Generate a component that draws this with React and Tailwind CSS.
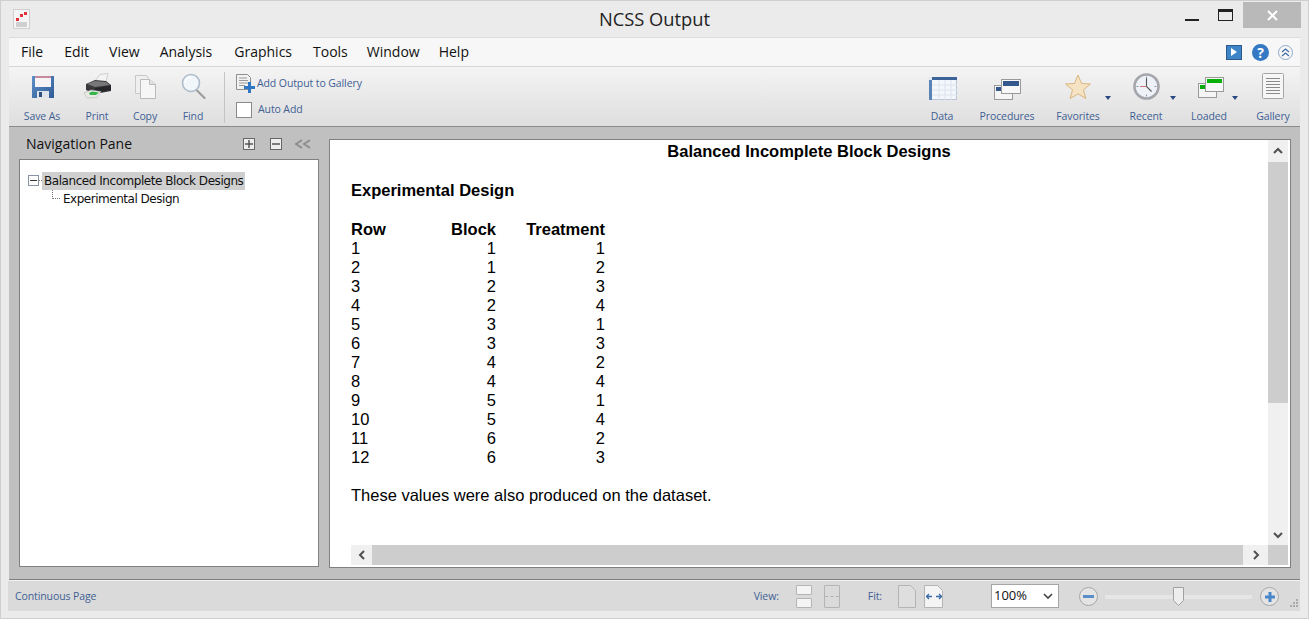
import React from 'react'

const UI_FONT = "font-['Open_Sans','Noto_Sans',sans-serif]"

const rows = [
  [1, 1, 1], [2, 1, 2], [3, 2, 3], [4, 2, 4], [5, 3, 1], [6, 3, 3],
  [7, 4, 2], [8, 4, 4], [9, 5, 1], [10, 5, 4], [11, 6, 2], [12, 6, 3],
]

function SaveIcon() {
  return (
    <svg width="22" height="22" viewBox="0 0 22 22">
      <defs>
        <linearGradient id="disk" x1="0" y1="0" x2="1" y2="1">
          <stop offset="0" stopColor="#5f8fc8" />
          <stop offset="1" stopColor="#2f5c96" />
        </linearGradient>
      </defs>
      <path d="M0 0h22v22H0z" fill="url(#disk)" />
      <rect x="3" y="0" width="16" height="11" fill="#f5f3f5" />
      <rect x="3" y="0" width="16" height="2" fill="#c9899c" />
      <rect x="5" y="15" width="12" height="7" fill="#dfe3ea" />
      <rect x="7" y="16" width="3" height="5" fill="#2f4f7e" />
    </svg>
  )
}

function PrintIcon() {
  return (
    <svg width="29" height="26" viewBox="0 0 29 26">
      <path d="M12 8 L17 1.500 L25 .5 L23 9z" fill="#f4f4f4" stroke="#aaa" strokeWidth="0.5" />
      <path d="M3 11 L12 7 L23 8 L28 12 V18 L12 21 L3 17z" fill="#3a3a3c" />
      <path d="M4 11 L12 8 L23 9 L27 12 L12 14z" fill="#77777a" />
      <path d="M12 15 L28 12.500 V17 L12 20z" fill="#26262a" />
      <path d="M1 20 L8 17 L18 18.500 L14 24.500 L4 25z" fill="#e6ece4" stroke="#aaa" strokeWidth="0.5" />
      <path d="M6 20 L9 18.500 L16 19.500 L13 22 L7 22z" fill="#38b54a" />
    </svg>
  )
}

function CopyIcon() {
  return (
    <svg width="21" height="24" viewBox="0 0 21 24">
      <path d="M.5.5h11l2 3v15H.5z" fill="#efefef" stroke="#c8c8c8" />
      <path d="M5.500 4.500h9l6 5v14h-15z" fill="#f6f6f6" stroke="#bbb" />
      <path d="M14.500 4.500v5h6" fill="#e2e2e2" stroke="#bbb" />
    </svg>
  )
}

function FindIcon() {
  return (
    <svg width="25" height="26" viewBox="0 0 25 26">
      <line x1="15.500" y1="17" x2="23.500" y2="25" stroke="#9c9c9c" strokeWidth="2.200" strokeLinecap="round" />
      <circle cx="10" cy="10" r="8.500" fill="#f1f6fb" stroke="#aebccb" strokeWidth="1.600" />
      <path d="M4 10a6 6 0 0 1 6-6" fill="none" stroke="#fff" strokeWidth="1.500" />
    </svg>
  )
}

function GalleryAddIcon() {
  return (
    <svg width="19" height="19" viewBox="0 0 19 19">
      <path d="M.5.5h11l3 3v12H.5z" fill="#f2f2f2" stroke="#8f8f8f" />
      <path d="M3 4h8M3 6.500h9M3 9h9M3 11.500h6" stroke="#9a9a9a" />
      <path d="M8 12h4V8h3v4h4v3h-4v4h-3v-4H8z" fill="#2f77c4" />
    </svg>
  )
}

function DataIcon() {
  return (
    <svg width="28" height="23" viewBox="0 0 28 23">
      <rect x=".5" y=".5" width="27" height="22" fill="#f3f6fb" stroke="#b9c5d6" />
      <rect x="0" y="0" width="28" height="3" fill="#3c6499" />
      <rect x="0" y="0" width="3" height="23" fill="#5a83b8" />
      <rect x="0" y="0" width="3" height="3" fill="#dfe8f4" />
      <path d="M3 8h25M3 13h25M3 18h25M10 3v20M16 3v20M22 3v20" stroke="#dce4ef" />
    </svg>
  )
}

function ProcIcon() {
  return (
    <svg width="27" height="21" viewBox="0 0 27 21">
      <rect x=".5" y="6.500" width="18" height="14" fill="#f5f5f5" stroke="#9a9a9a" />
      <rect x="2" y="8" width="7" height="4" fill="#35588c" />
      <rect x="7.500" y=".5" width="19" height="14" fill="#f7f7f7" stroke="#9a9a9a" />
      <rect x="9" y="2" width="16" height="5" fill="#35588c" />
    </svg>
  )
}

function LoadedIcon() {
  return (
    <svg width="27" height="21" viewBox="0 0 27 21">
      <rect x=".5" y="6.500" width="18" height="14" fill="#f5f5f5" stroke="#9a9a9a" />
      <rect x="2" y="8" width="7" height="4" fill="#08a808" />
      <rect x="7.500" y=".5" width="18" height="14" fill="#f7f7f7" stroke="#9a9a9a" />
      <rect x="9" y="2" width="15" height="4" fill="#08b008" />
    </svg>
  )
}

function StarIcon() {
  return (
    <svg width="26" height="26" viewBox="0 0 26 26">
      <path d="M13 1l3.500 8.500 9 .5-7 5.800 2.300 8.700L13 19.800 5.200 24.500l2.300-8.700-7-5.800 9-.5z" fill="#f5e3c3" stroke="#d9b77e" />
    </svg>
  )
}

function ClockIcon() {
  return (
    <svg width="27" height="27" viewBox="0 0 27 27">
      <circle cx="13.500" cy="13.500" r="12" fill="#eef2f8" stroke="#a4a6ab" strokeWidth="2.600" />
      <path d="M13.500 5v8.500l5 5" fill="none" stroke="#555" strokeWidth="1.100" />
      <path d="M13.500 13.500H7" stroke="#c77" />
      <path d="M13.500 3.500v2M13.500 21.500v2M3.500 13.500h2M21.500 13.500h2" stroke="#8a96a8" />
    </svg>
  )
}

function GalleryIcon() {
  return (
    <svg width="22" height="26" viewBox="0 0 22 26">
      <rect x=".5" y=".5" width="21" height="25" rx="1" fill="#f6f6f6" stroke="#a5a5a5" />
      <path d="M4 5.500h14M4 8.500h14M4 11.500h14M4 14.500h14M4 17.500h14M4 20.500h14" stroke="#8a8a8a" />
    </svg>
  )
}

function Caret() {
  return <span className="w-0 h-0 border-x-[3px] border-x-transparent border-t-[4px] border-t-[#2a4a7f]" />
}

function ToolButton({ label, width, caret, children }) {
  return (
    <div className={`relative flex flex-col items-center shrink-0 ${width}`}>
      <div className="h-[34px] flex items-center justify-center">{children}</div>
      <span className="mt-[6px] text-[10.5px] tracking-[-0.1px] leading-[14px] text-[#3f5f94] whitespace-nowrap">{label}</span>
      {caret && <span className="absolute -right-[2px] top-[27px] flex"><Caret /></span>}
    </div>
  )
}

function ScrollArrow({ d, className }) {
  return (
    <div className={`flex items-center justify-center bg-[#f0f0f0] ${className}`}>
      <svg width="12" height="12" viewBox="0 0 12 12">
        <path d={d} fill="none" stroke="#505050" strokeWidth="2" />
      </svg>
    </div>
  )
}

function ViewBtn({ className }) {
  return <span className={`block rounded-[1px] border border-[#b4b4b4] ${className}`} />
}

export default function App() {
  return (
    <div className={`w-[1309px] h-[619px] overflow-hidden flex flex-col bg-[#ebebeb] border border-[#cfcfcf] ${UI_FONT}`}>
      {/* title bar */}
      <div className="relative h-[36px] shrink-0 flex items-start pl-[12px] pt-[8px]">
        <svg width="17" height="20" viewBox="0 0 17 20">
          <rect x=".5" y=".5" width="16" height="19" fill="#f5f5f5" stroke="#cfcfcf" />
          <rect x="3" y="13" width="11" height="5" fill="#cfcfcf" />
          <rect x="3" y="9" width="3" height="3" fill="#e0323a" />
          <rect x="7" y="5" width="3" height="3" fill="#e0323a" />
          <rect x="11" y="3" width="3" height="3" fill="#e0323a" />
        </svg>
        <span className="flex-1 text-center text-[18.3px] leading-[24px] text-[#222] -mt-[2px] pl-[94px]">NCSS Output</span>
        <div className="flex items-start -mt-[7px] mr-[7px]">
          <span className="mt-[17px] w-[14px] h-[2px] bg-[#222]" />
          <span className="ml-[19px] mt-[7px] w-[15px] h-[12px] border border-[#222] border-t-[3px]" />
          <span className="ml-[10px] w-[58px] h-[26px] bg-[#b9b9b9] flex items-center justify-center">
            <svg width="11" height="11" viewBox="0 0 11 11">
              <path d="M1 1l9 9M10 1l-9 9" stroke="#fff" strokeWidth="2" />
            </svg>
          </span>
        </div>
      </div>

      {/* menu */}
      <div className="ml-[8px] mr-[8px] h-[30px] shrink-0 flex items-center pl-[12px] pr-[7px] pb-[2px] bg-[#f7f7f7] border-t border-[#dcdcdc] border-b border-b-[#d6d6d6] text-[14px] text-[#111]">
        <span>File</span>
        <span className="ml-[21px]">Edit</span>
        <span className="ml-[20px]">View</span>
        <span className="ml-[20px]">Analysis</span>
        <span className="ml-[22px]">Graphics</span>
        <span className="ml-[21px]">Tools</span>
        <span className="ml-[19px]">Window</span>
        <span className="ml-[19px]">Help</span>
        <div className="ml-auto mt-[2px] flex items-center">
          <span className="w-[16px] h-[15px] bg-[#3d85c6] border border-[#2c5a8c] flex items-center justify-center">
            <span className="w-0 h-0 border-y-[4px] border-y-transparent border-l-[6px] border-l-white" />
          </span>
          <span className="ml-[10px] w-[17px] h-[17px] rounded-full bg-[#3578c4] text-white text-[14px] leading-[17px] font-bold text-center">?</span>
          <span className="ml-[9px] w-[15px] h-[15px] rounded-full border border-[#8fa9cc] flex items-center justify-center">
            <svg width="9" height="9" viewBox="0 0 9 9">
              <path d="M1 4l3.500-3L8 4M1 8l3.500-3L8 8" fill="none" stroke="#3f6aa5" strokeWidth="1.200" />
            </svg>
          </span>
        </div>
      </div>

      {/* toolbar */}
      <div className="ml-[8px] mr-[8px] h-[60px] shrink-0 flex items-start pt-[2px] bg-gradient-to-b from-[#f4f4f4] to-[#dedede] border-b border-[#8c8c8c]">
        <ToolButton label="Save As" width="w-[48px] ml-[9px]"><span className="pt-[2px] pl-[1px]"><SaveIcon /></span></ToolButton>
        <ToolButton label="Print" width="w-[48px] ml-[7px]"><PrintIcon /></ToolButton>
        <ToolButton label="Copy" width="w-[48px]"><span className="pt-[2px]"><CopyIcon /></span></ToolButton>
        <ToolButton label="Find" width="w-[48px]"><FindIcon /></ToolButton>
        <span className="ml-[7px] mt-[3px] w-px h-[51px] bg-[#c4c4c4]" />
        <div className="ml-[11px] mt-[5px] flex flex-col text-[10.5px] tracking-[-0.1px] text-[#3f5f94]">
          <div className="flex items-center h-[19px] gap-[2px]">
            <GalleryAddIcon />
            <span>Add Output to Gallery</span>
          </div>
          <div className="flex items-center h-[16px] mt-[9px] gap-[6px]">
            <span className="w-[16px] h-[16px] bg-white border border-[#8a8a8a]" />
            <span>Auto Add</span>
          </div>
        </div>
        <div className="ml-auto flex items-start pr-[7px]">
          <ToolButton label="Data" width="w-[48px]"><span className="pt-[4px] pl-[1px]"><DataIcon /></span></ToolButton>
          <ToolButton label="Procedures" width="w-[66px] ml-[8px]"><span className="pt-[6px]"><ProcIcon /></span></ToolButton>
          <ToolButton label="Favorites" caret width="w-[62px] ml-[7px]"><span className="pt-[2px]"><StarIcon /></span></ToolButton>
          <ToolButton label="Recent" caret width="w-[56px] ml-[9px]"><ClockIcon /></ToolButton>
          <ToolButton label="Loaded" caret width="w-[54px] ml-[8px]"><span className="pl-[4px] pt-[2px]"><LoadedIcon /></span></ToolButton>
          <ToolButton label="Gallery" width="w-[40px] ml-[17px]"><GalleryIcon /></ToolButton>
        </div>
      </div>

      {/* main area */}
      <div className="ml-[8px] mr-[8px] h-[453px] shrink-0 flex items-start bg-[#c0c0c0] pl-[10px] pr-[9px] pt-[12px] border-b border-[#808080]">
        <div className="w-[300px] shrink-0 flex flex-col">
          <div className="h-[21px] pb-[12px] flex items-center pl-[7px] pr-[7px]">
            <span className="text-[14px] leading-[14px] text-[#111]">Navigation Pane</span>
            <span className="ml-auto w-[12px] h-[12px] border border-[#666] bg-[#eee] flex items-center justify-center">
              <svg width="10" height="10" viewBox="0 0 10 10"><path d="M1 5h8M5 1v8" stroke="#555" strokeWidth="1.500" /></svg>
            </span>
            <span className="ml-[15px] w-[12px] h-[12px] border border-[#666] bg-[#eee] flex items-center justify-center">
              <svg width="10" height="10" viewBox="0 0 10 10"><path d="M1 5h8" stroke="#555" strokeWidth="1.500" /></svg>
            </span>
            <svg className="ml-[12px]" width="18" height="10" viewBox="0 0 18 10">
              <path d="M8 1L2 5l6 4M16 1l-6 4 6 4" fill="none" stroke="#8c8c8c" strokeWidth="1.800" />
            </svg>
          </div>
          <div className="h-[408px] mt-[-1px] border border-[#808080] bg-white pt-[11px] pl-[8px] font-['DejaVu_Sans',sans-serif] text-[12px] text-[#111]">
            <div className="flex items-center h-[19px]">
              <span className="w-[11px] h-[11px] border border-[#8a93a3] flex items-center justify-center">
                <span className="w-[7px] h-px bg-[#333]" />
              </span>
              <span className="w-[3px] border-t border-dotted border-[#777]" />
              <span className="pl-[2px] pr-[2px] bg-[#cfcfcf] h-[18px] leading-[18px] tracking-[-0.45px] whitespace-nowrap">Balanced Incomplete Block Designs</span>
            </div>
            <div className="flex items-center h-[18px] ml-[24px]">
              <span className="w-[8px] h-[9px] -mt-[9px] border-l border-b border-dotted border-[#777]" />
              <span className="ml-[3px] tracking-[-0.48px]">Experimental Design</span>
            </div>
          </div>
        </div>

        <div className="ml-[10px] w-[962px] h-[429px] shrink-0 border border-[#808080] bg-white flex flex-col font-['Liberation_Sans',sans-serif] text-[16.5px] leading-[19px] text-black">
          <div className="flex flex-1 min-h-0">
            <div className="flex-1 pt-[2px] pl-[21px]">
              <h1 className="font-bold text-center ml-[-21px] pl-[20px]">Balanced Incomplete Block Designs</h1>
              <h2 className="font-bold mt-[20px]">Experimental Design</h2>
              <div className="grid grid-cols-[88px_57px_109px] w-max mt-[20px]">
                <span className="font-bold">Row</span>
                <span className="font-bold text-right">Block</span>
                <span className="font-bold text-right">Treatment</span>
                {rows.map(r => (
                  <React.Fragment key={r[0]}>
                    <span>{r[0]}</span>
                    <span className="text-right">{r[1]}</span>
                    <span className="text-right">{r[2]}</span>
                  </React.Fragment>
                ))}
              </div>
              <p className="mt-[19px]">These values were also produced on the dataset.</p>
            </div>
            <div className="w-[20px] shrink-0 mr-[2px] flex flex-col bg-[#f0f0f0]">
              <ScrollArrow d="M2 8l4-4 4 4" className="h-[22px] shrink-0" />
              <div className="h-[241px] bg-[#cdcdcd]" />
              <div className="flex-1" />
              <ScrollArrow d="M2 4l4 4 4-4" className="h-[20px] shrink-0" />
            </div>
          </div>
          <div className="h-[20px] mb-[2px] shrink-0 flex ml-[21px] mr-[2px] bg-[#cdcdcd]">
            <ScrollArrow d="M8 2L4 6l4 4" className="w-[21px]" />
            <div className="flex-1" />
            <ScrollArrow d="M4 2l4 4-4 4" className="w-[25px]" />
            <div className="w-[20px]" />
          </div>
        </div>
      </div>

      {/* status bar */}
      <div className="ml-[7px] mr-[8px] h-[31px] shrink-0 flex items-center bg-[#dadada] border-t border-[#f2f2f2] text-[10.5px] tracking-[-0.1px] text-[#3f5f94] pl-[7px] pt-[1px]">
        <span>Continuous Page</span>
        <span className="ml-auto">View:</span>
        <div className="ml-[17px] flex flex-col gap-[3px]">
          <ViewBtn className="w-[16px] h-[10px] bg-[#f4f4f4]" />
          <ViewBtn className="w-[16px] h-[10px] bg-[#f4f4f4]" />
        </div>
        <div className="ml-[12px] w-[16px] h-[23px] rounded-[1px] border border-[#b4b4b4] flex items-center">
          <span className="w-full border-t border-dashed border-[#b4b4b4]" />
        </div>
        <span className="ml-[28px]">Fit:</span>
        <svg className="ml-[16px]" width="18" height="23" viewBox="0 0 18 23">
          <path d="M.5.500h12l5 5v17H.5z" fill="#dedede" stroke="#b4b4b4" />
        </svg>
        <span className="relative ml-[8px] w-[19px] h-[23px] flex items-center justify-center">
          <svg className="absolute inset-0" width="19" height="23" viewBox="0 0 19 23">
            <path d="M.5.500h13l5 5v17H.5z" fill="#f4f4f4" stroke="#b4b4b4" />
          </svg>
          <svg className="relative" width="16" height="7" viewBox="0 0 16 7">
            <path d="M0 3.500h6M10 3.500h6M3 1L.5 3.500 3 6M13 1l2.500 2.500L13 6" fill="none" stroke="#3a6aa8" strokeWidth="1.300" />
          </svg>
        </span>
        <div className="ml-[48px] -mt-[1px] w-[68px] h-[24px] bg-white border border-[#a5a5a5] flex items-center pl-[2px] pr-[5px] text-[13px] tracking-normal text-[#111]">
          <span>100%</span>
          <svg className="ml-auto" width="10" height="7" viewBox="0 0 10 7"><path d="M1 1l4 4 4-4" fill="none" stroke="#444" strokeWidth="1.600" /></svg>
        </div>
        <span className="ml-[20px] w-[19px] h-[19px] rounded-full bg-[#e4e4e4] border border-[#a8a8a8] flex items-center justify-center">
          <span className="w-[11px] h-[3px] bg-[#5b8ec9]" />
        </span>
        <div className="relative ml-[7px] w-[147px] h-[4px] bg-[#e6e6e6]">
          <svg className="absolute left-[68px] -top-[8px]" width="11" height="19" viewBox="0 0 11 19">
            <path d="M.5.500h10v13l-5 5-5-5z" fill="#ededed" stroke="#a0a0a0" />
          </svg>
        </div>
        <span className="ml-[8px] w-[19px] h-[19px] rounded-full bg-[#e4e4e4] border border-[#a8a8a8] flex items-center justify-center">
          <svg width="12" height="12" viewBox="0 0 12 12"><path d="M1 6h10M6 1v10" stroke="#4a86c8" strokeWidth="3" /></svg>
        </span>
        <svg className="ml-[10px] mt-[12px]" width="11" height="10" viewBox="0 0 11 10">
          <path d="M7 1h2v2H7zM4 4h2v2H4zM7 4h2v2H7zM1 7h2v2H1zM4 7h2v2H4zM7 7h2v2H7z" fill="#aaa" />
        </svg>
      </div>
    </div>
  )
}
